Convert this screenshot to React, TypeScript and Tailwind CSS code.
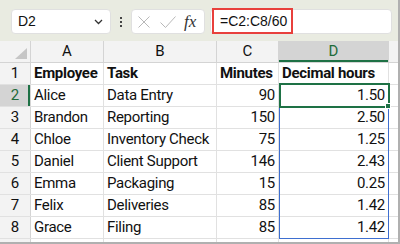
import React from 'react';

const cols = [
  { key: 'A', w: 'w-[73px]' },
  { key: 'B', w: 'w-[113px]' },
  { key: 'C', w: 'w-[62px]' },
  { key: 'D', w: 'w-[110px]' },
];

const rows: [string, string, string, string][] = [
  ['Employee', 'Task', 'Minutes', 'Decimal hours'],
  ['Alice', 'Data Entry', '90', '1.50'],
  ['Brandon', 'Reporting', '150', '2.50'],
  ['Chloe', 'Inventory Check', '75', '1.25'],
  ['Daniel', 'Client Support', '146', '2.43'],
  ['Emma', 'Packaging', '15', '0.25'],
  ['Felix', 'Deliveries', '85', '1.42'],
  ['Grace', 'Filing', '85', '1.42'],
];

const font = { fontFamily: 'Roboto, "Liberation Sans", sans-serif' };

function Toolbar() {
  return (
    <div className="flex h-[41px] items-start bg-[#e9ebe1] pl-[11px] pt-[9px]">
      {/* name box */}
      <div className="flex h-[25px] w-[100px] items-center justify-between rounded-[4px] border border-[#e0e0e0] bg-white pl-[6px] pr-[7px]">
        <span className="text-[14px] text-[#111]" style={{ fontFamily: '"Liberation Sans", sans-serif' }}>D2</span>
        <svg width="9" height="6" viewBox="0 0 9 6" fill="none">
          <path d="M1 1l3.5 3.5L8 1" stroke="#333" strokeWidth="1.3" />
        </svg>
      </div>
      {/* dots */}
      <div className="ml-[9px] mr-[9px] flex h-[25px] flex-col items-center justify-center gap-[2px]">
        <span className="h-[2px] w-[2px] bg-[#444]" />
        <span className="h-[2px] w-[2px] bg-[#444]" />
        <span className="h-[2px] w-[2px] bg-[#444]" />
      </div>
      {/* fx box */}
      <div className="flex h-[25px] w-[74px] items-center rounded-[4px] border border-[#e0e0e0] bg-white pl-[6px]">
        <svg width="12" height="12" viewBox="0 0 12 12" fill="none">
          <path d="M0.5 0.5l11 11M11.5 0.5l-11 11" stroke="#b8b8b8" strokeWidth="1" />
        </svg>
        <svg className="ml-[10px]" width="16" height="12" viewBox="0 0 16 12" fill="none">
          <path d="M0.5 6.5l5 5L15.5 0.5" stroke="#b8b8b8" strokeWidth="1" />
        </svg>
        <span
          className="ml-[8px] text-[17px] italic leading-none text-[#333]"
          style={{ fontFamily: '"Liberation Serif", serif' }}
        >
          fx
        </span>
      </div>
      {/* formula box */}
      <div className="ml-[5px] flex h-[25px] w-[182px] items-start rounded-[4px] border border-[#e0e0e0] bg-white pl-[1px]">
        <div
          className="-mt-[2px] flex h-[26px] w-[81px] items-center border-2 border-[#e8403c] pl-[6px] text-[14px] text-[#111]"
          style={{ fontFamily: '"Liberation Sans", sans-serif' }}
        >
          =C2:C8/60
        </div>
      </div>
    </div>
  );
}

function Sheet() {
  return (
    <div className="relative" style={font}>
      {/* column header */}
      <div className="flex h-[22px] border-b border-[#d4d4d4] bg-[#f3f3f3]">
        <div className="relative w-[31px] shrink-0 border-r border-[#d4d4d4]">
          <svg className="absolute bottom-[3px] right-[3px]" width="12" height="11" viewBox="0 0 12 11">
            <path d="M12 0V11H0Z" fill="#c6c6c6" />
          </svg>
        </div>
        {cols.map((c) => (
          <div
            key={c.key}
            className={`${c.w} flex shrink-0 items-center justify-center border-r border-[#d4d4d4] text-[15px] ${
              c.key === 'D' ? 'bg-[#d4d4d4] text-[#1e6b3a] shadow-[inset_0_-2px_0_#1e7145]' : 'text-[#111]'
            }`}
          >
            {c.key}
          </div>
        ))}
        <div className="flex-1" />
      </div>
      {rows.map((r, i) => (
        <div key={i} className="flex h-[22px] border-b border-[#e1e1e1]">
          <div
            className={`flex w-[31px] shrink-0 items-center justify-center border-r border-[#d4d4d4] text-[15px] ${
              i === 1 ? 'bg-[#d4d4d4] text-[#1e6b3a] shadow-[inset_-2px_0_0_#1e7145]' : 'bg-[#f3f3f3] text-[#111]'
            }`}
          >
            {i + 1}
          </div>
          {r.map((v, j) => (
            <div
              key={j}
              className={`${cols[j].w} flex shrink-0 items-center overflow-hidden whitespace-nowrap border-r border-[#e1e1e1] px-[3px] text-[15px] tracking-[-0.3px] text-[#111] ${
                i === 0 ? 'font-bold' : ''
              } ${i > 0 && j >= 2 ? 'justify-end' : ''}`}
            >
              {v}
            </div>
          ))}
          <div className="flex-1" />
        </div>
      ))}
      <div className="flex h-[10px]">
        <div className="w-[31px] shrink-0 border-r border-[#d4d4d4] bg-[#f3f3f3]" />
        <div className="w-[73px] shrink-0 border-r border-[#e1e1e1]" />
        <div className="w-[113px] shrink-0 border-r border-[#e1e1e1]" />
        <div className="w-[62px] shrink-0 border-r border-[#e1e1e1]" />
        <div className="w-[110px] shrink-0 border-r border-[#e1e1e1]" />
      </div>
      {/* spill range */}
      <div className="pointer-events-none absolute left-[279px] top-[43px] h-[155px] w-[110px] border border-[#3e6fd0]" />
      {/* active cell */}
      <div className="pointer-events-none absolute left-[279px] top-[42px] h-[25px] w-[111px] border-2 border-[#1e7145]" />
      <div className="pointer-events-none absolute left-[385px] top-[62px] h-[6px] w-[6px] border border-white bg-[#1e7145]" />
    </div>
  );
}

export default function App() {
  return (
    <div className="relative h-[244px] w-[400px] overflow-hidden bg-white">
      <Toolbar />
      <Sheet />
      <div className="pointer-events-none absolute inset-0 border-b-2 border-r-2 border-[#b0b0b0]" />
    </div>
  );
}
